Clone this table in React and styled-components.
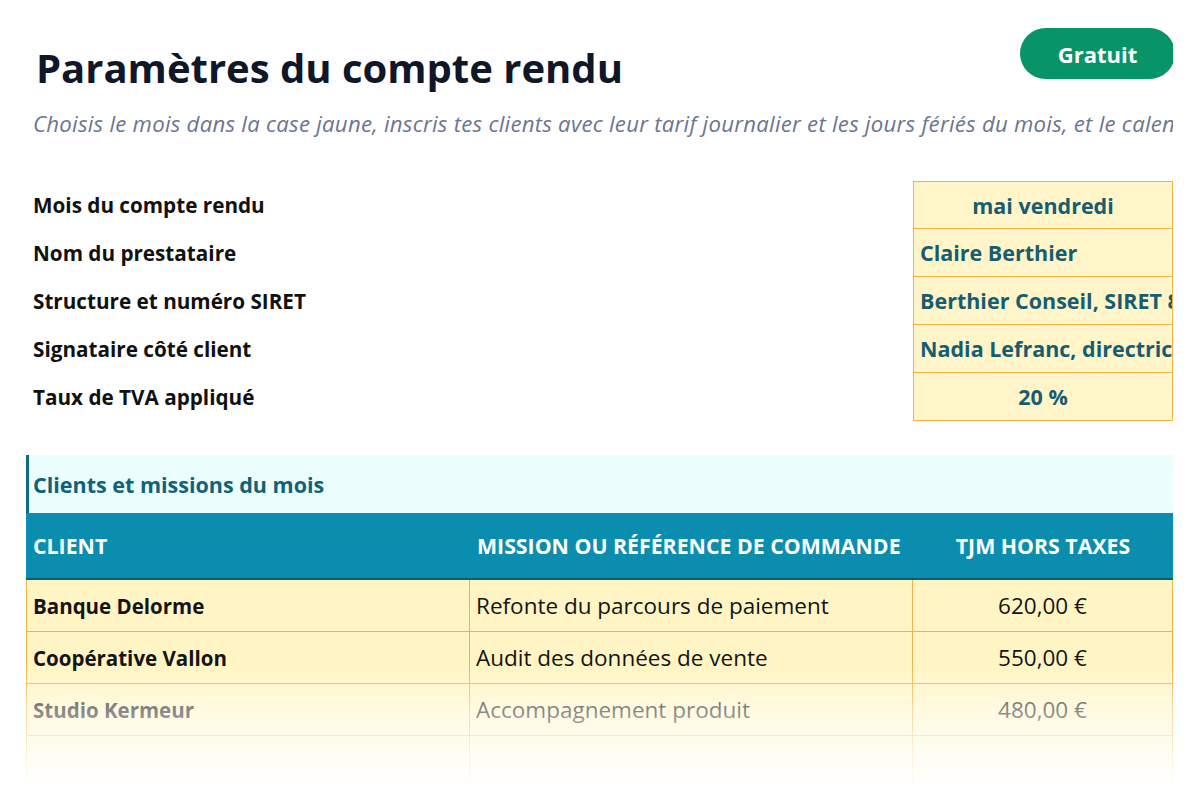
import React from "react"
import styled, { createGlobalStyle } from "styled-components"

const params = [
  { label: "Mois du compte rendu", value: "mai vendredi", center: true },
  { label: "Nom du prestataire", value: "Claire Berthier" },
  { label: "Structure et numéro SIRET", value: "Berthier Conseil, SIRET 812 345 678 00019" },
  { label: "Signataire côté client", value: "Nadia Lefranc, directrice des opérations" },
  { label: "Taux de TVA appliqué", value: "20 %", center: true },
]

const missions = [
  { client: "Banque Delorme", mission: "Refonte du parcours de paiement", tjm: "620,00 €" },
  { client: "Coopérative Vallon", mission: "Audit des données de vente", tjm: "550,00 €" },
  { client: "Studio Kermeur", mission: "Accompagnement produit", tjm: "480,00 €" },
  { client: "", mission: "", tjm: "" },
]

export default function App() {
  return (
    <>
      <GlobalStyle />
      <Page>
        <Sheet>
          <Header>
            <Title>Paramètres du compte rendu</Title>
            <Badge>Gratuit</Badge>
          </Header>
          <Subtitle>
            Choisis le mois dans la case jaune, inscris tes clients avec leur tarif journalier et les
            jours fériés du mois, et le calendrier se remplit tout seul.
          </Subtitle>

          <ParamGrid>
            {params.map((p) => (
              <React.Fragment key={p.label}>
                <ParamLabel>{p.label}</ParamLabel>
                <ParamValue center={p.center}>{p.value}</ParamValue>
              </React.Fragment>
            ))}
          </ParamGrid>

          <Section>Clients et missions du mois</Section>
          <Table>
            <HeadCell>Client</HeadCell>
            <HeadCell>Mission ou référence de commande</HeadCell>
            <HeadCell center>TJM hors taxes</HeadCell>
            {missions.map((m, i) => (
              <React.Fragment key={i}>
                <Cell bold first>{m.client}</Cell>
                <Cell>{m.mission}</Cell>
                <Cell center>{m.tjm}</Cell>
              </React.Fragment>
            ))}
          </Table>
        </Sheet>
        <Fade />
      </Page>
    </>
  )
}

const GlobalStyle = createGlobalStyle`
  html, body {
    margin: 0;
    background: #ffffff;
  }
  body {
    font-family: "Open Sans", Lato, sans-serif;
    color: #111827;
  }
`

const Page = styled.div`
  position: relative;
  width: 1200px;
  height: 800px;
  overflow: hidden;
  background: #ffffff;
`

const Sheet = styled.div`
  width: 1147px;
  margin-left: 26px;
  padding-top: 28px;
  overflow: hidden;
`

const Header = styled.div`
  display: flex;
  justify-content: space-between;
  align-items: flex-start;
  padding-left: 10px;
`

const Title = styled.h1`
  margin: 14px 0 0;
  font-size: 40px;
  line-height: 52px;
  font-weight: 700;
  color: #0f1729;
`

const Badge = styled.div`
  width: 155px;
  height: 51px;
  border-radius: 26px;
  background: #079467;
  color: #ffffff;
  font-size: 22px;
  font-weight: 700;
  display: flex;
  align-items: center;
  justify-content: center;
  margin-right: -2px;
`

const Subtitle = styled.p`
  margin: 16px 0 0;
  padding-left: 7px;
  font-size: 22.2px;
  line-height: 28px;
  letter-spacing: 0.25px;
  font-style: italic;
  color: #6b7590;
  white-space: nowrap;
  overflow: hidden;
`

const ParamGrid = styled.div`
  display: grid;
  grid-template-columns: 887px 260px;
  grid-auto-rows: 48px;
  margin-top: 43px;
`

const ParamLabel = styled.div`
  display: flex;
  align-items: center;
  padding-left: 7px;
  font-size: 20.7px;
  font-weight: 700;
  color: #111111;
`

const ParamValue = styled.div`
  display: flex;
  align-items: center;
  justify-content: ${(p) => (p.center ? "center" : "flex-start")};
  padding: 0 6px;
  background: #fff5c9;
  border: 1px solid #efb347;
  border-top: none;
  &:nth-child(2) {
    border-top: 1px solid #efb347;
  }
  font-size: 21.5px;
  font-weight: 700;
  color: #175d70;
  white-space: nowrap;
  overflow: hidden;
`

const Section = styled.div`
  margin-top: 34px;
  height: 58px;
  display: flex;
  align-items: center;
  padding-left: 4px;
  background: #ecfdfe;
  border-left: 3px solid #0f6a83;
  font-size: 21.5px;
  font-weight: 700;
  color: #0f6277;
`

const Table = styled.div`
  display: grid;
  grid-template-columns: 444px 443px 260px;
  grid-template-rows: 67px;
  grid-auto-rows: 52px;
`

const HeadCell = styled.div`
  display: flex;
  align-items: center;
  justify-content: ${(p) => (p.center ? "center" : "flex-start")};
  padding: 0 7px;
  background: #0b8db0;
  border-bottom: 2px solid #0c5e73;
  color: #ffffff;
  font-size: 21.3px;
  font-weight: 700;
  text-transform: uppercase;
  white-space: nowrap;
`

const Cell = styled.div`
  display: flex;
  align-items: center;
  justify-content: ${(p) => (p.center ? "center" : "flex-start")};
  padding: 0 6px;
  background: #fff5c4;
  border-right: 1px solid #efb347;
  border-bottom: 1px solid #efb347;
  border-left: ${(p) => (p.first ? "1px solid #efb347" : "none")};
  font-size: ${(p) => (p.bold ? "20.5px" : "22.5px")};
  font-weight: ${(p) => (p.bold ? 700 : 400)};
  color: #141414;
  white-space: nowrap;
  overflow: hidden;
`

const Fade = styled.div`
  position: absolute;
  left: 0;
  right: 0;
  top: 665px;
  height: 135px;
  pointer-events: none;
  background: linear-gradient(
    to bottom,
    rgba(255, 255, 255, 0) 0%,
    rgba(255, 255, 255, 0.45) 30%,
    rgba(255, 255, 255, 0.8) 65%,
    #ffffff 92%
  );
`
